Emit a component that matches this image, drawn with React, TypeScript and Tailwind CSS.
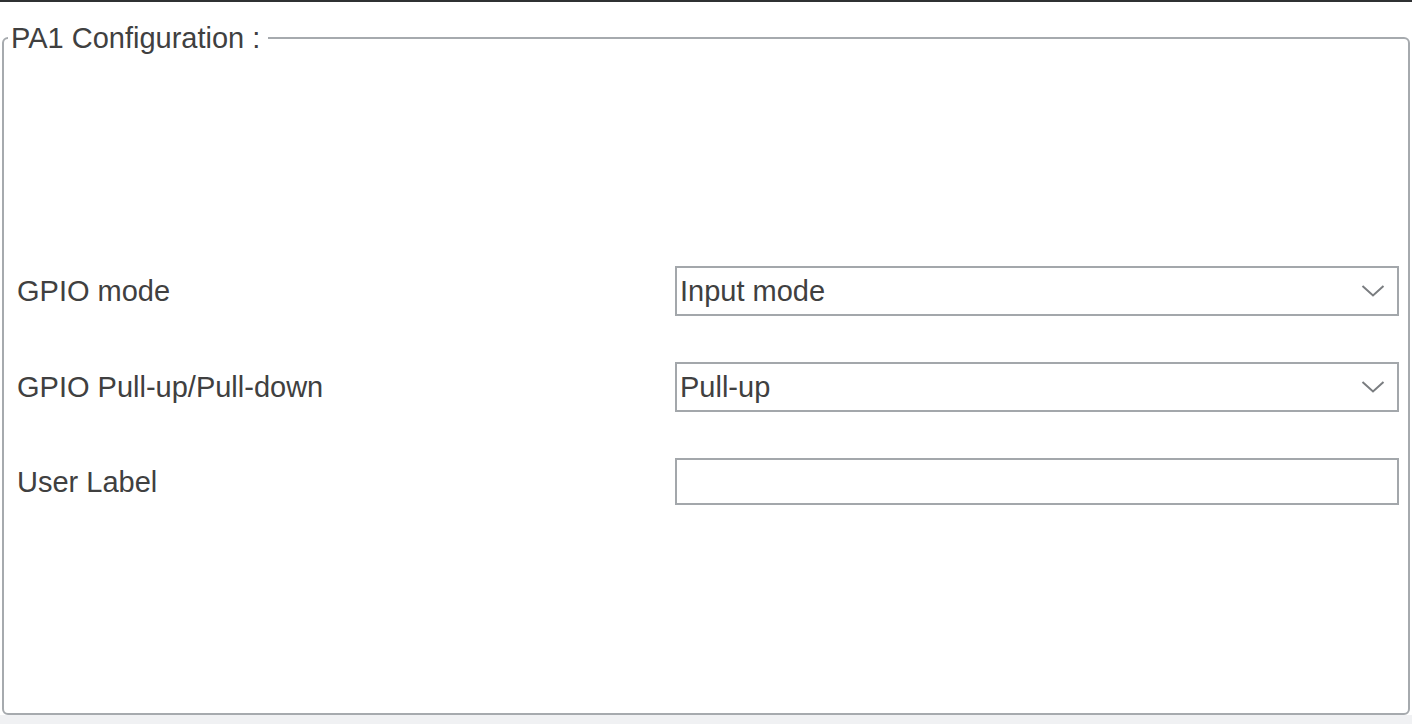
const rows = [
  { label: "GPIO mode", value: "Input mode", kind: "select" },
  { label: "GPIO Pull-up/Pull-down", value: "Pull-up", kind: "select" },
  { label: "User Label", value: "", kind: "input" },
];

function Chevron() {
  return (
    <svg width="24" height="14" viewBox="0 0 24 14" className="shrink-0">
      <path d="M1.5 2 L12 11.5 L22.5 2" fill="none" stroke="#7a7d80" strokeWidth="2" />
    </svg>
  );
}

export default function App() {
  return (
    <div className="w-[1412px] h-[724px] bg-white flex flex-col font-['Liberation_Sans',Arial,sans-serif] text-[#404040]">
      <div className="h-[2px] bg-[#2f3133]" />
      <div className="flex-1 pt-[20px] pl-[2px] pr-[2px]">
        <fieldset className="h-full border-2 border-[#a6aaae] rounded-[6px] p-0 m-0">
          <legend className="ml-[4px] pl-[3px] pr-[8px] text-[29px] leading-[32px]">
            PA1 Configuration :
          </legend>
          <div className="mt-[212px] flex flex-col gap-[46px]">
            {rows.map((r) => (
              <div key={r.label} className="grid grid-cols-[671px_1fr] items-center pr-[9px]">
                <span className="pl-[13px] text-[29px] leading-[32px]">{r.label}</span>
                {r.kind === "select" ? (
                  <div className="h-[50px] border-2 border-[#a3a7ab] flex items-center justify-between pl-[3px] pr-[12px]">
                    <span className="text-[29px] leading-[32px]">{r.value}</span>
                    <Chevron />
                  </div>
                ) : (
                  <input
                    className="h-[47px] border-2 border-[#a3a7ab] outline-none px-[3px] text-[29px]"
                    defaultValue={r.value}
                  />
                )}
              </div>
            ))}
          </div>
        </fieldset>
      </div>
      <div className="h-[9px] bg-[#f0f1f3]" />
    </div>
  );
}
